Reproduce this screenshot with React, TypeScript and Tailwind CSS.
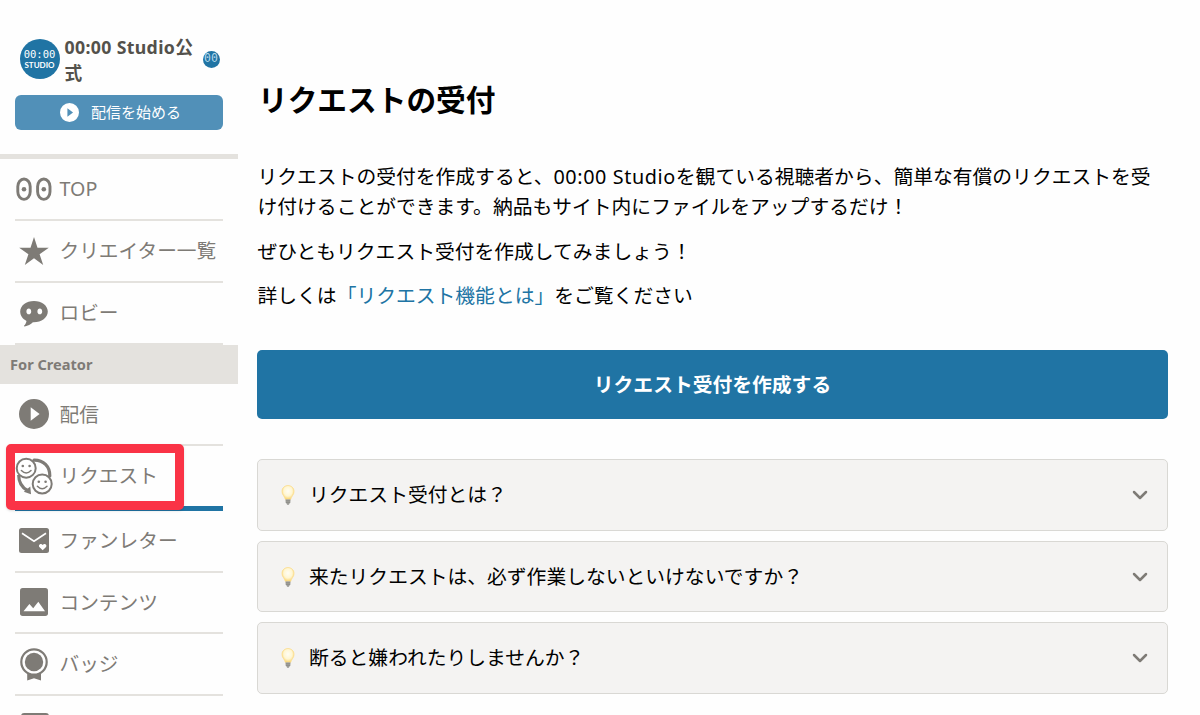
import type { ReactNode } from 'react';

function PlayIcon({ className }: { className: string }) {
  return (
    <svg viewBox="0 0 30 30" className={className} fill="currentColor">
      <path fillRule="evenodd" d="M15 0a15 15 0 1 0 0 30a15 15 0 0 0 0-30ZM11.7 8.2 20.6 15 11.7 21.8Z" />
    </svg>
  );
}

function TopIcon() {
  return (
    <svg viewBox="0 0 36 24" className="w-9 h-6" fill="none" stroke="currentColor" strokeWidth="2.9">
      <rect x="1.8" y="2" width="12.4" height="20.4" rx="6.2" ry="7.6" />
      <rect x="21.6" y="2" width="12.4" height="20.4" rx="6.2" ry="7.6" />
      <circle cx="8" cy="12.2" r="2.3" fill="currentColor" stroke="none" />
      <circle cx="27.8" cy="12.2" r="2.3" fill="currentColor" stroke="none" />
    </svg>
  );
}

function StarIcon() {
  return (
    <svg viewBox="0 0 30 28" className="w-[30px] h-7" fill="currentColor">
      <path d="M15 0 18.5 10.7H29.8L20.6 17.2 24.2 28 15 21.3 5.8 28 9.4 17.2.2 10.7H11.5Z" />
    </svg>
  );
}

function LobbyIcon() {
  return (
    <svg viewBox="0 0 28 26" className="w-7 h-[26px] mt-0.5" fill="currentColor">
      <path
        fillRule="evenodd"
        d="M14 0C6.3 0 .2 4.6.2 10.6c0 4.3 2.5 7.5 6.3 9.3-.3 1.9-1.1 3.4-2.3 4.6-.4.5-.1 1 .5.9 3.2-.5 6-1.9 8.2-4.1 8.3.3 14.9-4.3 14.9-10.7C27.8 4.6 21.7 0 14 0ZM8.8 7.5c1.4 0 2.4 1.3 2.4 2.9s-1 2.9-2.4 2.9-2.4-1.3-2.4-2.9 1-2.9 2.4-2.9ZM19.8 7.5c1.4 0 2.4 1.3 2.4 2.9s-1 2.9-2.4 2.9-2.4-1.3-2.4-2.9 1-2.9 2.4-2.9Z"
      />
    </svg>
  );
}

function Face({ x, y }: { x: number; y: number }) {
  return (
    <g transform={`translate(${x} ${y})`}>
      <circle r="9.5" fill="#fff" strokeWidth="2" />
      <circle cx="-3.4" cy="-2.2" r="1.3" fill="currentColor" stroke="none" />
      <circle cx="3.4" cy="-2.2" r="1.3" fill="currentColor" stroke="none" />
      <path d="M-4.8 2.3Q0 7.2 4.8 2.3" strokeWidth="1.5" />
    </g>
  );
}

function RequestIcon() {
  return (
    <svg viewBox="0 0 38 38" className="w-[38px] h-[38px] shrink-0" fill="none" stroke="currentColor" strokeLinecap="round">
      <path d="M19 3.2C28.5 3 35 9.5 34.8 19" strokeWidth="3.2" />
      <path d="M3.7 18C3.7 25 7 30.5 12.5 33.5" strokeWidth="3.2" strokeLinecap="butt" />
      <path d="M15.3 29.5 16 37.2 8.8 34.8Z" fill="currentColor" stroke="none" />
      <Face x={11.2} y={11.2} />
      <Face x={27.2} y={27} />
    </svg>
  );
}

function LetterIcon() {
  return (
    <svg viewBox="0 0 30 25" className="w-[30px] h-[25px]">
      <rect width="30" height="25" rx="2.5" fill="currentColor" />
      <path d="M3 5.3 15 13.2 27 5.3" fill="none" stroke="#fff" strokeWidth="1.7" />
      <path d="M23.7 22.3 20.6 19.3C18.7 17.2 21.8 14.5 23.7 17C25.6 14.5 28.7 17.2 26.8 19.3Z" fill="#fff" />
    </svg>
  );
}

function ImageIcon() {
  return (
    <svg viewBox="0 0 28 28" className="w-7 h-7">
      <rect width="28" height="28" rx="2.7" fill="currentColor" />
      <path d="M3.5 23.2 9.4 16 13.2 20.2 18.3 13.7 25 23.2Z" fill="#fff" />
    </svg>
  );
}

function BadgeIcon() {
  return (
    <svg viewBox="0 0 28 33" className="w-7 h-[33px]">
      <circle cx="14" cy="14" r="12.7" fill="none" stroke="currentColor" strokeWidth="2.2" />
      <circle cx="14" cy="14" r="9.2" fill="currentColor" />
      <path d="M7.2 24.5Q14 28.3 21 24.5V32.5L14 30.3 7.2 32.5Z" fill="currentColor" />
    </svg>
  );
}

function BulbIcon() {
  return (
    <svg viewBox="0 0 14 20" className="w-3.5 h-5">
      <defs>
        <radialGradient id="glow" cx="50%" cy="40%" r="58%">
          <stop offset="0" stopColor="#fffdf4" />
          <stop offset="0.6" stopColor="#fff6d2" />
          <stop offset="1" stopColor="#fbd56f" />
        </radialGradient>
      </defs>
      <path d="M7 .6C3.3.6 1 3.2 1 6.5c0 3.2 2.6 4.7 3.4 8h5.2c.8-3.3 3.4-4.8 3.4-8C13 3.2 10.7.6 7 .6Z" fill="url(#glow)" stroke="#fbdc8b" strokeWidth=".8" />
      <path d="M4.6 14.3h4.8v3L8 19.5H6l-1.4-2.2Z" fill="#aaa9a6" />
      <path d="M4.7 15.8h4.6M5 17.3h4M6 19.1h2" stroke="#74736f" strokeWidth=".6" />
    </svg>
  );
}

function NavItem({ icon, label, active }: { icon: ReactNode; label: string; active?: boolean }) {
  return (
    <li
      className={
        active
          ? 'relative flex items-center h-[64.5px] ml-[15px] w-[208px] border-b-[5px] border-[#2074a4]'
          : 'flex items-center h-[61.8px] ml-[15px] w-[208px] border-b-[2px] border-[#e4e2de]'
      }
    >
      <span className="flex justify-center w-[38.5px] shrink-0">{icon}</span>
      <span className="ml-1.5 text-[19.7px] leading-none whitespace-nowrap">{label}</span>
      {active && (
        <span className="absolute -left-[9px] -top-[2px] w-[178px] h-[66px] rounded-[5px] border-[9px] border-[#fa3346] shadow-sm" />
      )}
    </li>
  );
}

const mainMenu = [
  { label: 'TOP', icon: <TopIcon /> },
  { label: 'クリエイター一覧', icon: <StarIcon /> },
  { label: 'ロビー', icon: <LobbyIcon /> },
];

const creatorMenu = [
  { label: '配信', icon: <PlayIcon className="w-[30px] h-[30px]" /> },
  { label: 'リクエスト', icon: <RequestIcon />, active: true },
  { label: 'ファンレター', icon: <LetterIcon /> },
  { label: 'コンテンツ', icon: <ImageIcon /> },
  { label: 'バッジ', icon: <BadgeIcon /> },
];

const faqs = [
  'リクエスト受付とは？',
  '来たリクエストは、必ず作業しないといけないですか？',
  '断ると嫌われたりしませんか？',
];

function Sidebar() {
  return (
    <aside className="w-[237.5px] shrink-0 text-[#7e7b76]">
      <div className="h-[159.3px] border-b-[5px] border-[#e4e2de] pt-[33px] px-[14.5px]">
        <div className="flex items-center h-[52px] pl-[5px]">
          <div className="flex flex-col items-center justify-center w-10 h-10 rounded-full bg-[#2074a4] text-white shrink-0">
            <span className="font-['DejaVu_Sans_Mono'] text-[10.5px] leading-[11px]">00:00</span>
            <span className="font-['Lato'] font-bold text-[8px] leading-[10px]">STUDIO</span>
          </div>
          <p className="ml-[5px] mt-px w-[138px] text-[17.7px] leading-[26px] font-bold text-[#53514b]">
            <span className="tracking-[0.35px]">00:00 Studio</span>公<br />式
          </p>
          <div className="flex items-center justify-center w-[17px] h-[17px] rounded-full bg-[#2074a4] text-[#b5d7e9] font-['DejaVu_Sans_Mono'] text-[11.5px] leading-none shrink-0">
            00
          </div>
        </div>
        <button className="flex items-center justify-center mt-2.5 pl-1 w-[208px] h-[35px] rounded-[6px] bg-[#5190b8] text-white text-[15px]">
          <PlayIcon className="w-[19px] h-[19px] mr-3" />
          配信を始める
        </button>
      </div>

      <ul>
        {mainMenu.map((item) => (
          <NavItem key={item.label} {...item} />
        ))}
      </ul>
      <h2 className="h-[39.8px] bg-[#e4e2de] pl-2.5 text-[14.6px] leading-[39px] font-bold">For Creator</h2>
      <ul>
        {creatorMenu.map((item) => (
          <NavItem key={item.label} {...item} />
        ))}
      </ul>
      {/* Top edge of the next item, cut off by the viewport */}
      <div className="mt-[17px] ml-[21px] w-7 h-7 rounded-[3px] bg-[#7e7b76]" />
    </aside>
  );
}

export default function App() {
  return (
    <div className="flex h-[715px] overflow-hidden bg-[#fefefe] text-black font-['Noto_Sans','Noto_Sans_CJK_JP',sans-serif]">
      <Sidebar />

      <main className="ml-[19.5px] w-[911px]">
        <h1 className="mt-[78px] pl-px text-[29.7px] leading-[44px] font-bold">リクエストの受付</h1>

        <div className="mt-10 pl-[0.5px] text-[19.8px] leading-[30px] space-y-[14.5px]">
          <p className="whitespace-nowrap">
            リクエストの受付を作成すると、<span className="tracking-[0.6px]">00:00 Studio</span>を観ている視聴者から、簡単な有償のリクエストを受
            <br />
            け付けることができます。納品もサイト内にファイルをアップするだけ！
          </p>
          <p>ぜひともリクエスト受付を作成してみましょう！</p>
          <p>
            詳しくは<a className="text-[#2074a4]">「リクエスト機能とは」</a>をご覧ください
          </p>
        </div>

        <button className="block mt-[39px] w-full h-[69px] rounded-[5px] bg-[#2074a4] text-white text-[19.8px] font-bold">
          リクエスト受付を作成する
        </button>

        <div className="mt-10 space-y-2.5">
          {faqs.map((question) => (
            <div key={question} className="flex items-center h-[71.7px] px-[23px] rounded-[5px] border border-[#d9d8d4] bg-[#f4f3f2]">
              <BulbIcon />
              <span className="ml-[14px] flex-1 text-[19.8px] leading-none">{question}</span>
              <svg viewBox="0 0 16 10" className="w-4 h-2.5 mr-[-3.5px]" fill="none" stroke="#7e7b76" strokeWidth="2.5" strokeLinecap="round" strokeLinejoin="round">
                <path d="M2 2 8 8 14 2" />
              </svg>
            </div>
          ))}
        </div>
      </main>
    </div>
  );
}
